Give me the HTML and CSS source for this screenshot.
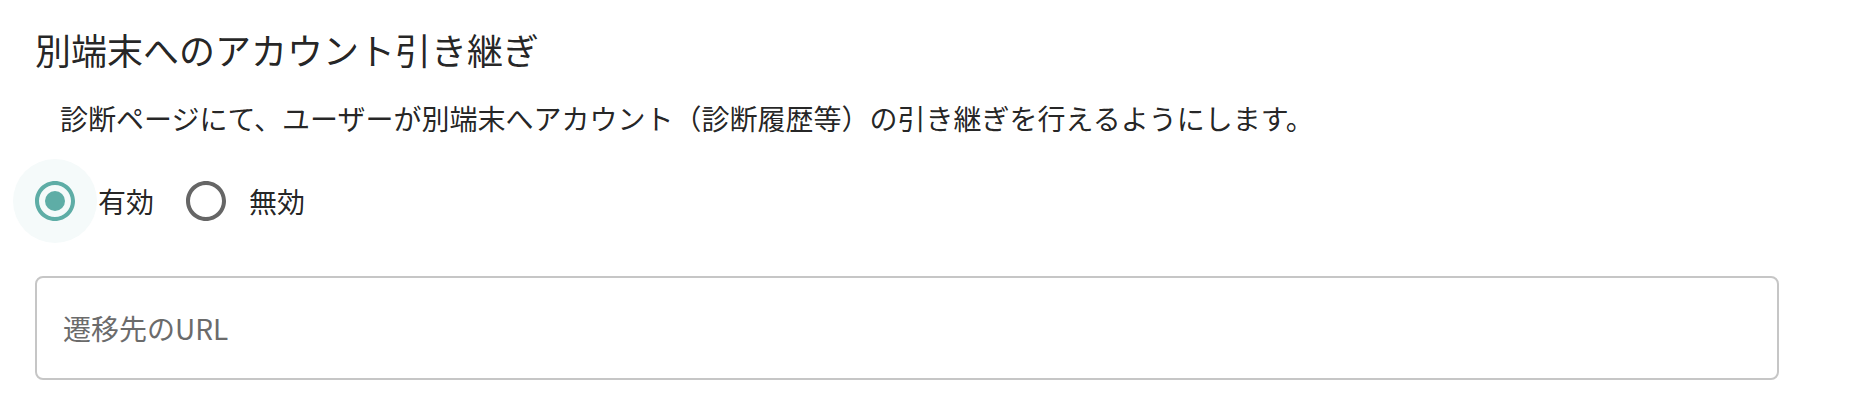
FILE: index.html
```html
<!DOCTYPE html>
<html lang="ja">
<head>
<meta charset="utf-8">
<title>別端末へのアカウント引き継ぎ</title>
<link rel="stylesheet" href="styles.css">
</head>
<body>
<main class="panel">
  <h1 class="title">別端末へのアカウント引き継ぎ</h1>
  <p class="desc">診断ページにて、ユーザーが別端末へアカウント（診断履歴等）の引き継ぎを行えるようにします。</p>
  <div class="radio-group" role="radiogroup">
    <label class="option">
      <span class="radio checked">
        <svg viewBox="0 0 24 24" width="48" height="48" aria-hidden="true">
          <path d="M12 2C6.48 2 2 6.48 2 12s4.48 10 10 10 10-4.480 10-10S17.52 2 12 2zm0 18c-4.42 0-8-3.58-8-8s3.58-8 8-8 8 3.58 8 8-3.58 8-8 8z"/>
          <circle cx="12" cy="12" r="5"/>
        </svg>
      </span>
      <span class="label-text">有効</span>
    </label>
    <label class="option">
      <span class="radio">
        <svg viewBox="0 0 24 24" width="48" height="48" aria-hidden="true">
          <path d="M12 2C6.48 2 2 6.48 2 12s4.48 10 10 10 10-4.48 10-10S17.52 2 12 2zm0 18c-4.42 0-8-3.58-8-8s3.58-8 8-8 8 3.58 8 8-3.58 8-8 8z"/>
        </svg>
      </span>
      <span class="label-text">無効</span>
    </label>
  </div>
  <div class="field">
    <input class="url-input" type="text" placeholder="遷移先のURL">
  </div>
</main>
</body>
</html>
```

FILE: styles.css
```css
html, body {
  margin: 0;
  padding: 0;
  background: #ffffff;
}

body {
  font-family: "Noto Sans CJK JP", "Noto Sans", sans-serif;
  color: rgba(0, 0, 0, 0.87);
}

.panel {
  width: 1744px;
  padding-left: 35px;
  padding-top: 22px;
  box-sizing: content-box;
}

.title {
  margin: 0;
  font-size: 36px;
  line-height: 54px;
  font-weight: 400;
  color: rgba(0, 0, 0, 0.87);
}

.desc {
  margin: 21px 0 0 25px;
  font-size: 28px;
  line-height: 42px;
  color: rgba(0, 0, 0, 0.87);
}

.radio-group {
  display: flex;
  align-items: center;
  margin-top: 20px;
  margin-left: -22px;
}

.option {
  display: flex;
  align-items: center;
  margin-right: 10px;
  cursor: pointer;
}

.radio {
  width: 84px;
  height: 84px;
  border-radius: 50%;
  display: flex;
  align-items: center;
  justify-content: center;
  fill: #666666;
}

.radio.checked {
  background: #f5fafa;
  fill: #5eada6;
}

.label-text {
  font-size: 28px;
  line-height: 42px;
  margin-left: 1px;
}

.field {
  margin-top: 33px;
}

.url-input {
  display: block;
  width: 1744px;
  height: 104px;
  box-sizing: border-box;
  border: 2px solid #c6c6c6;
  border-radius: 8px;
  padding: 0 26px;
  font-family: "Noto Sans CJK JP", "Noto Sans", sans-serif;
  font-size: 28px;
  color: rgba(0, 0, 0, 0.87);
  background: #ffffff;
  outline: none;
}

.url-input::placeholder {
  color: #6b6b6b;
  opacity: 1;
}
```
